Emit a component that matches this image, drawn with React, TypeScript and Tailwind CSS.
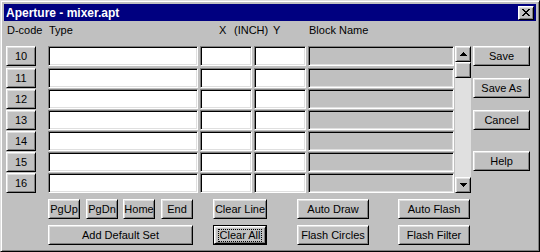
import React from "react";

const raised =
  "border border-t-white border-l-white border-b-black border-r-black shadow-[inset_1px_1px_#dfdfdf,inset_-1px_-1px_#808080] bg-[#c0c0c0]";
const sunkenWhite =
  "border border-t-[#808080] border-l-[#808080] border-b-white border-r-white shadow-[inset_1px_1px_#000,inset_-1px_-1px_#dfdfdf] bg-white";
const sunkenGray =
  "border border-t-[#808080] border-l-[#808080] border-b-white border-r-white shadow-[inset_1px_1px_#000,inset_-1px_-1px_#dfdfdf] bg-[#c0c0c0]";

function Btn({ label, w, h = "h-[20px]" }: { label: string; w: string; h?: string }) {
  return (
    <div className={`${raised} ${w} ${h} flex items-center justify-center leading-none text-black`}>
      {label}
    </div>
  );
}

function CloseGlyph() {
  const rows = [
    "XX....XX",
    ".XX..XX.",
    "..XXXX..",
    "...XX...",
    "..XXXX..",
    ".XX..XX.",
    "XX....XX",
  ];
  return (
    <svg width="8" height="7" viewBox="0 0 8 7" shapeRendering="crispEdges">
      {rows.map((r, y) =>
        r.split("").map((c, x) => (c === "X" ? <rect key={`${x}-${y}`} x={x} y={y} width="1" height="1" fill="#000" /> : null))
      )}
    </svg>
  );
}

function Arrow({ up }: { up: boolean }) {
  return (
    <svg width="7" height="4" viewBox="0 0 7 4" shapeRendering="crispEdges">
      {up ? (
        <>
          <rect x="3" y="0" width="1" height="1" fill="#000" />
          <rect x="2" y="1" width="3" height="1" fill="#000" />
          <rect x="1" y="2" width="5" height="1" fill="#000" />
          <rect x="0" y="3" width="7" height="1" fill="#000" />
        </>
      ) : (
        <>
          <rect x="0" y="0" width="7" height="1" fill="#000" />
          <rect x="1" y="1" width="5" height="1" fill="#000" />
          <rect x="2" y="2" width="3" height="1" fill="#000" />
          <rect x="3" y="3" width="1" height="1" fill="#000" />
        </>
      )}
    </svg>
  );
}

const codes = ["10", "11", "12", "13", "14", "15", "16"];

export default function App() {
  return (
    <div className="w-[540px] h-[252px] bg-[#c0c0c0] border border-t-[#dfdfdf] border-l-[#dfdfdf] border-b-black border-r-black shadow-[inset_1px_1px_#fff,inset_-1px_-1px_#808080] p-[3px] flex flex-col font-['Liberation_Sans',Arial,sans-serif] text-[11px] text-black select-none">
      {/* Title bar */}
      <div className="h-[17px] bg-[#000080] flex items-center justify-between pl-[2px] pr-[2px] shrink-0">
        <span className="text-white font-bold text-[12px] leading-none">Aperture - mixer.apt</span>
        <div className={`${raised} w-[16px] h-[14px] flex items-center justify-center`}>
          <CloseGlyph />
        </div>
      </div>

      {/* Header labels */}
      <div className="h-[25px] pt-[3px] pl-[3px] flex items-start leading-[13px] shrink-0">
        <span className="w-[42px]">D-code</span>
        <span className="w-[170px]">Type</span>
        <span className="w-[15px]">X</span>
        <span className="w-[39px]">(INCH)</span>
        <span className="w-[36px]">Y</span>
        <span>Block Name</span>
      </div>

      {/* Main area */}
      <div className="flex items-start h-[147px] shrink-0">
        <div className="flex flex-col pl-[2px]">
          {codes.map((c, i) => (
            <div key={c} className={`flex h-[20px] ${i === 0 ? "mb-[2px]" : "mb-px"}`}>
              <Btn label={c} w="w-[30px]" />
              <div className={`${sunkenWhite} ml-[12px] w-[150px] h-[20px]`} />
              <div className={`${sunkenWhite} ml-[2px] w-[52px] h-[20px]`} />
              <div className={`${sunkenWhite} ml-[2px] w-[52px] h-[20px]`} />
              <div className={`${sunkenGray} ml-[2px] w-[146px] h-[20px]`} />
            </div>
          ))}
        </div>

        {/* Scrollbar */}
        <div className="ml-px w-[16px] h-[147px] flex flex-col bg-[#e0e0e0]">
          <div className={`${raised} h-[16px] flex items-center justify-center`}>
            <Arrow up />
          </div>
          <div className={`${raised} h-[16px]`} />
          <div className="flex-1" />
          <div className={`${raised} h-[16px] flex items-center justify-center`}>
            <Arrow up={false} />
          </div>
        </div>

        {/* Right buttons */}
        <div className="ml-[2px] flex flex-col">
          <Btn label="Save" w="w-[57px]" />
          <div className="mt-[12px]">
            <Btn label="Save As" w="w-[57px]" />
          </div>
          <div className="mt-[12px]">
            <Btn label="Cancel" w="w-[57px]" />
          </div>
          <div className="mt-[21px]">
            <Btn label="Help" w="w-[57px]" />
          </div>
        </div>
      </div>

      {/* Bottom buttons */}
      <div className="mt-[6px] flex pl-[44px] shrink-0">
        <Btn label="PgUp" w="w-[32px]" />
        <div className="ml-[6px]"><Btn label="PgDn" w="w-[32px]" /></div>
        <div className="ml-[5px]"><Btn label="Home" w="w-[32px]" /></div>
        <div className="ml-[6px]"><Btn label="End" w="w-[32px]" /></div>
        <div className="ml-[20px]"><Btn label="Clear Line" w="w-[54px]" /></div>
        <div className="ml-[30px]"><Btn label="Auto Draw" w="w-[72px]" /></div>
        <div className="ml-[29px]"><Btn label="Auto Flash" w="w-[72px]" /></div>
      </div>
      <div className="mt-[6px] flex pl-[44px] shrink-0">
        <Btn label="Add Default Set" w="w-[145px]" />
        <div className="ml-[20px] w-[54px] h-[20px] border border-black">
          <div className={`${raised} w-full h-full flex items-center justify-center leading-none`}>
            <span className="border border-dotted border-black px-[1px] leading-[11px]">Clear All</span>
          </div>
        </div>
        <div className="ml-[30px]"><Btn label="Flash Circles" w="w-[72px]" /></div>
        <div className="ml-[29px]"><Btn label="Flash Filter" w="w-[72px]" /></div>
      </div>
    </div>
  );
}
